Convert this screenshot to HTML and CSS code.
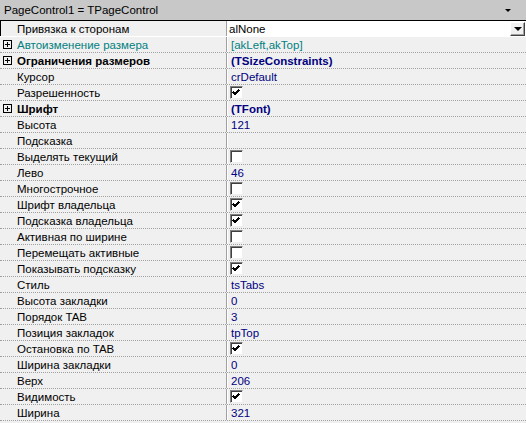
FILE: index.html
```html
<!DOCTYPE html>
<html>
<head>
<meta charset="utf-8">
<link rel="stylesheet" href="styles.css">
</head>
<body>
<div class="inspector">
  <div class="header">
    <span class="title">PageControl1 = TPageControl</span>
    <span class="hdr-arrow"></span>
  </div>
  <div class="rows">
    <div class="row selected">
      <div class="name"><span class="label">Привязка к сторонам</span></div>
      <div class="value edit"><span class="edit-text">alNone</span><span class="drop-btn"><span class="tri"></span></span></div>
    </div>
    <div class="row teal">
      <div class="name"><span class="plus"></span><span class="label">Автоизменение размера</span></div>
      <div class="value">[akLeft,akTop]</div>
    </div>
    <div class="row bold">
      <div class="name"><span class="plus"></span><span class="label">Ограничения размеров</span></div>
      <div class="value">(TSizeConstraints)</div>
    </div>
    <div class="row">
      <div class="name"><span class="label">Курсор</span></div>
      <div class="value">crDefault</div>
    </div>
    <div class="row">
      <div class="name"><span class="label">Разрешенность</span></div>
      <div class="value"><span class="check"><svg class="tick" width="11" height="11" viewBox="0 0 11 11"><polyline points="2,5 4,7 8,3" /></svg></span></div>
    </div>
    <div class="row bold">
      <div class="name"><span class="plus"></span><span class="label">Шрифт</span></div>
      <div class="value">(TFont)</div>
    </div>
    <div class="row">
      <div class="name"><span class="label">Высота</span></div>
      <div class="value">121</div>
    </div>
    <div class="row">
      <div class="name"><span class="label">Подсказка</span></div>
      <div class="value"></div>
    </div>
    <div class="row">
      <div class="name"><span class="label">Выделять текущий</span></div>
      <div class="value"><span class="check"></span></div>
    </div>
    <div class="row">
      <div class="name"><span class="label">Лево</span></div>
      <div class="value">46</div>
    </div>
    <div class="row">
      <div class="name"><span class="label">Многострочное</span></div>
      <div class="value"><span class="check"></span></div>
    </div>
    <div class="row">
      <div class="name"><span class="label">Шрифт владельца</span></div>
      <div class="value"><span class="check"><svg class="tick" width="11" height="11" viewBox="0 0 11 11"><polyline points="2,5 4,7 8,3" /></svg></span></div>
    </div>
    <div class="row">
      <div class="name"><span class="label">Подсказка владельца</span></div>
      <div class="value"><span class="check"><svg class="tick" width="11" height="11" viewBox="0 0 11 11"><polyline points="2,5 4,7 8,3" /></svg></span></div>
    </div>
    <div class="row">
      <div class="name"><span class="label">Активная по ширине</span></div>
      <div class="value"><span class="check"></span></div>
    </div>
    <div class="row">
      <div class="name"><span class="label">Перемещать активные</span></div>
      <div class="value"><span class="check"></span></div>
    </div>
    <div class="row">
      <div class="name"><span class="label">Показывать подсказку</span></div>
      <div class="value"><span class="check"><svg class="tick" width="11" height="11" viewBox="0 0 11 11"><polyline points="2,5 4,7 8,3" /></svg></span></div>
    </div>
    <div class="row">
      <div class="name"><span class="label">Стиль</span></div>
      <div class="value">tsTabs</div>
    </div>
    <div class="row">
      <div class="name"><span class="label">Высота закладки</span></div>
      <div class="value">0</div>
    </div>
    <div class="row">
      <div class="name"><span class="label">Порядок TAB</span></div>
      <div class="value">3</div>
    </div>
    <div class="row">
      <div class="name"><span class="label">Позиция закладок</span></div>
      <div class="value">tpTop</div>
    </div>
    <div class="row">
      <div class="name"><span class="label">Остановка по TAB</span></div>
      <div class="value"><span class="check"><svg class="tick" width="11" height="11" viewBox="0 0 11 11"><polyline points="2,5 4,7 8,3" /></svg></span></div>
    </div>
    <div class="row">
      <div class="name"><span class="label">Ширина закладки</span></div>
      <div class="value">0</div>
    </div>
    <div class="row">
      <div class="name"><span class="label">Верх</span></div>
      <div class="value">206</div>
    </div>
    <div class="row">
      <div class="name"><span class="label">Видимость</span></div>
      <div class="value"><span class="check"><svg class="tick" width="11" height="11" viewBox="0 0 11 11"><polyline points="2,5 4,7 8,3" /></svg></span></div>
    </div>
    <div class="row">
      <div class="name"><span class="label">Ширина</span></div>
      <div class="value">321</div>
    </div>
  </div>
</div>
</body>
</html>
```
FILE: styles.css
```css
html, body {
  margin: 0;
  padding: 0;
  background: #f0f0f0;
}
.inspector {
  width: 526px;
  height: 423px;
  overflow: hidden;
  background: #f0f0f0;
  font-family: "Liberation Sans", Arial, sans-serif;
  font-size: 11.5px;
  color: #000;
}
.header {
  height: 20px;
  background: #c8c8c8;
  border-bottom: 1px solid #000;
  display: flex;
  align-items: center;
  justify-content: space-between;
  padding: 0 15px 0 4px;
}
.title {
  font-size: 11.5px;
  color: #000;
}
.hdr-arrow {
  width: 0;
  height: 0;
  border-left: 3px solid transparent;
  border-right: 3px solid transparent;
  border-top: 3px solid #000;
  margin-top: 1px;
}
.rows {
  display: flex;
  flex-direction: column;
}
.row {
  height: 15px;
  display: flex;
  border-bottom: 1px dotted #a0a0a0;
}
.name {
  width: 227px;
  flex: none;
  display: flex;
  align-items: center;
  border-right: 1px solid #a0a0a0;
  box-sizing: border-box;
  padding-left: 17px;
  position: relative;
  white-space: nowrap;
}
.value {
  flex: 1;
  display: flex;
  align-items: center;
  padding-left: 3px;
  color: #000080;
  white-space: nowrap;
  border-left: 1px solid #ffffff;
}
.row.teal .label, .row.teal .value {
  color: #008080;
}
.row.bold .label, .row.bold .value {
  font-weight: bold;
}
.row.selected {
  border-bottom: 1px solid #ffffff;
}
.row.selected .name {
  border-left: 1px solid #000;
  padding-left: 16px;
}
.value.edit {
  background: #ffffff;
  color: #000;
  padding-left: 1px;
  justify-content: space-between;
}
.drop-btn {
  width: 15px;
  height: 14px;
  box-sizing: border-box;
  background: #f0f0f0;
  border-top: 1px solid #ffffff;
  border-left: 1px solid #ffffff;
  border-right: 1px solid #404040;
  border-bottom: 1px solid #404040;
  box-shadow: inset -1px -1px 0 #a0a0a0;
  display: flex;
  align-items: center;
  justify-content: center;
  margin-right: 1px;
}
.tri {
  width: 0;
  height: 0;
  border-left: 4px solid transparent;
  border-right: 4px solid transparent;
  border-top: 4px solid #000;
}
.plus {
  position: absolute;
  left: 3px;
  top: 3px;
  width: 9px;
  height: 9px;
  box-sizing: border-box;
  border: 1px solid #000;
}
.plus::before {
  content: "";
  position: absolute;
  left: 1px;
  top: 3px;
  width: 5px;
  height: 1px;
  background: #000;
}
.plus::after {
  content: "";
  position: absolute;
  left: 3px;
  top: 1px;
  width: 1px;
  height: 5px;
  background: #000;
}
.check {
  width: 13px;
  height: 13px;
  box-sizing: border-box;
  background: #ffffff;
  border-top: 1px solid #808080;
  border-left: 1px solid #808080;
  border-right: 1px solid #f0f0f0;
  border-bottom: 1px solid #f0f0f0;
  box-shadow: inset 1px 1px 0 #404040;
  position: relative;
  margin-left: -1px;
  display: block;
}
.tick {
  position: absolute;
  left: 0;
  top: 0;
  display: block;
}
.tick polyline {
  fill: none;
  stroke: #000;
  stroke-width: 2;
  shape-rendering: crispEdges;
}
```
